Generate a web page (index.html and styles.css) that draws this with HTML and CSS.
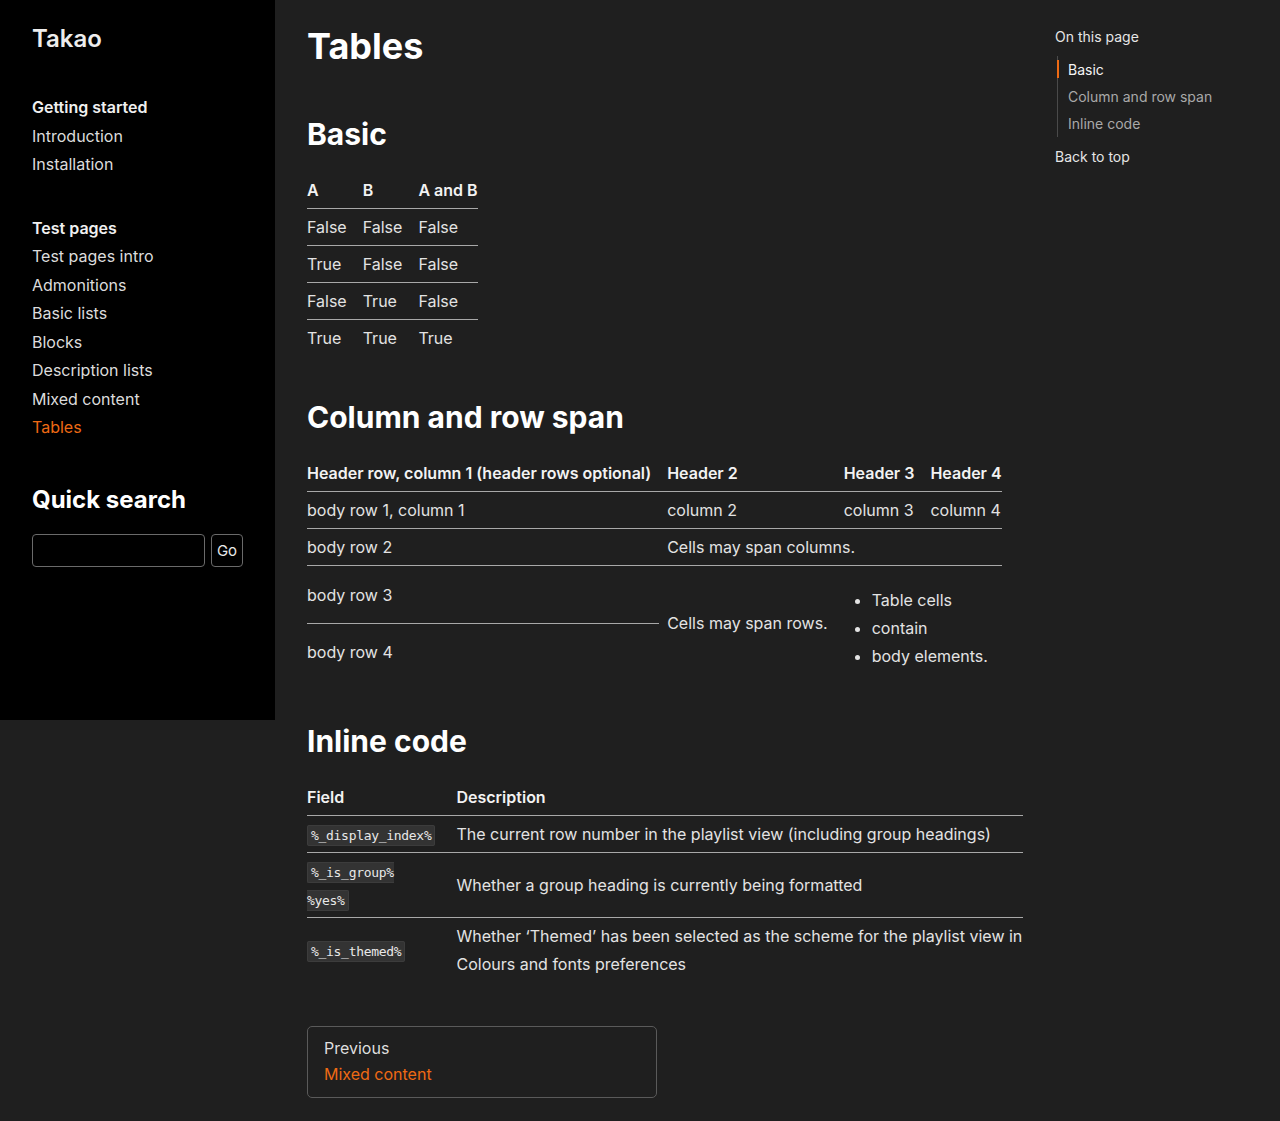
FILE: index.html
```html
<!DOCTYPE html>
<html lang="en">
<head>
<meta charset="utf-8">
<title>Tables</title>
<link rel="stylesheet" href="styles.css">
</head>
<body>
<div class="page">
  <aside class="sidebar">
    <div class="logo">Takao</div>
    <nav class="nav">
      <div class="nav-group">
        <div class="nav-title">Getting started</div>
        <a class="nav-link" href="#">Introduction</a>
        <a class="nav-link" href="#">Installation</a>
      </div>
      <div class="nav-group">
        <div class="nav-title">Test pages</div>
        <a class="nav-link" href="#">Test pages intro</a>
        <a class="nav-link" href="#">Admonitions</a>
        <a class="nav-link" href="#">Basic lists</a>
        <a class="nav-link" href="#">Blocks</a>
        <a class="nav-link" href="#">Description lists</a>
        <a class="nav-link" href="#">Mixed content</a>
        <a class="nav-link active" href="#">Tables</a>
      </div>
    </nav>
    <h3 class="search-title">Quick search</h3>
    <form class="search">
      <input class="search-input" type="text">
      <button class="search-btn" type="button">Go</button>
    </form>
  </aside>

  <main class="content">
    <h1 class="title">Tables</h1>

    <h2 class="section">Basic</h2>
    <table class="tbl">
      <thead><tr><th>A</th><th>B</th><th>A and B</th></tr></thead>
      <tbody>
        <tr><td>False</td><td>False</td><td>False</td></tr>
        <tr><td>True</td><td>False</td><td>False</td></tr>
        <tr><td>False</td><td>True</td><td>False</td></tr>
        <tr><td>True</td><td>True</td><td>True</td></tr>
      </tbody>
    </table>

    <h2 class="section">Column and row span</h2>
    <table class="tbl">
      <thead><tr><th>Header row, column 1 (header rows optional)</th><th>Header 2</th><th>Header 3</th><th>Header 4</th></tr></thead>
      <tbody>
        <tr><td>body row 1, column 1</td><td>column 2</td><td>column 3</td><td>column 4</td></tr>
        <tr><td>body row 2</td><td colspan="3">Cells may span columns.</td></tr>
        <tr class="row3"><td>body row 3</td><td rowspan="2" class="nob">Cells may span rows.</td><td rowspan="2" colspan="2" class="nob">
          <ul class="cell-list"><li>Table cells</li><li>contain</li><li>body elements.</li></ul>
        </td></tr>
        <tr class="row4"><td>body row 4</td></tr>
      </tbody>
    </table>

    <h2 class="section">Inline code</h2>
    <table class="tbl full">
      <thead><tr><th>Field</th><th>Description</th></tr></thead>
      <tbody>
        <tr><td><code>%_display_index%</code></td><td>The current row number in the playlist view (including group headings)</td></tr>
        <tr><td><code>%_is_group% %yes%</code></td><td>Whether a group heading is currently being formatted</td></tr>
        <tr><td><code>%_is_themed%</code></td><td>Whether ‘Themed’ has been selected as the scheme for the playlist view in Colours and fonts preferences</td></tr>
      </tbody>
    </table>

    <div class="pager">
      <a class="prev" href="#">
        <span class="prev-label">Previous</span>
        <span class="prev-title">Mixed content</span>
      </a>
    </div>
  </main>

  <aside class="toc">
    <div class="toc-title">On this page</div>
    <ul class="toc-list">
      <li class="toc-item active">Basic</li>
      <li class="toc-item">Column and row span</li>
      <li class="toc-item">Inline code</li>
    </ul>
    <div class="toc-top">Back to top</div>
  </aside>
</div>
</body>
</html>
```

FILE: styles.css
```css
html, body {
  margin: 0;
  padding: 0;
  background: #1f1f1f;
}
body {
  font-family: Inter, "Noto Sans", sans-serif;
  font-size: 16px;
  line-height: 28.5px;
  color: #e3e3e3;
}
a { text-decoration: none; color: inherit; }

.page {
  display: flex;
  align-items: flex-start;
  min-height: 1121px;
}

.sidebar {
  width: 275px;
  flex: none;
  box-sizing: border-box;
  height: 720px;
  background: #000;
  padding: 21px 32px 0 32px;
}
.logo {
  font-size: 24px;
  font-weight: 600;
  line-height: 36px;
  color: #ededed;
  margin-bottom: 36px;
}
.nav-group {
  display: flex;
  flex-direction: column;
  margin-bottom: 35px;
}
.nav-title {
  font-weight: 600;
  color: #f0f0f0;
}
.nav-link { color: #dcdcdc; }
.nav-link.active { color: #ee6a14; }

.search-title {
  font-size: 24px;
  font-weight: 700;
  line-height: 36px;
  color: #fff;
  margin: 40px 0 16px;
}
.search {
  display: flex;
  gap: 6px;
}
.search-input {
  width: 173px;
  height: 33px;
  box-sizing: border-box;
  background: #000;
  border: 1px solid #6a6a6a;
  border-radius: 4px;
  margin: 0;
}
.search-btn {
  height: 33px;
  width: 32px;
  box-sizing: border-box;
  background: #000;
  border: 1px solid #6a6a6a;
  border-radius: 4px;
  color: #e8e8e8;
  font-family: Inter, sans-serif;
  font-size: 15px;
  padding: 0;
  margin: 0;
}

.content {
  width: 716px;
  flex: none;
  padding: 0 32px 24px;
}
.title {
  font-size: 36px;
  font-weight: 700;
  line-height: 44px;
  color: #fff;
  margin: 24px 0 47px;
}
.section {
  font-size: 30px;
  font-weight: 700;
  line-height: 38px;
  color: #fff;
  margin: 0 0 19px;
}
.tbl {
  border-collapse: collapse;
  margin-bottom: 42px;
  line-height: 28px;
}
.tbl th, .tbl td {
  text-align: left;
  padding: 4px 8px;
  vertical-align: middle;
}
.tbl th {
  font-weight: 600;
  color: #f2f2f2;
  border-bottom: 1px solid #a8a8a8;
}
.tbl td {
  border-bottom: 1px solid #a8a8a8;
}
.tbl tr > :first-child { padding-left: 0; }
.tbl tr > :last-child { padding-right: 0; }
.tbl tbody tr:last-child td { border-bottom: none; }
.tbl td.nob { border-bottom: none; }
.row3 td:first-child { height: 49px; }
.cell-list {
  margin: 16px 0 6px;
  padding-left: 28px;
}
.tbl.full { width: 100%; }

code {
  font-family: "DejaVu Sans Mono", monospace;
  font-size: 13px;
  line-height: 1;
  letter-spacing: -0.3px;
  background: #333;
  border: 1px solid #3c3c3c;
  border-radius: 2px;
  padding: 2px 3px;
  color: #e8e8e8;
}

.pager { margin-top: 44px; }
.prev {
  display: flex;
  flex-direction: column;
  width: 350px;
  box-sizing: border-box;
  border: 1px solid #5a5a5a;
  border-radius: 5px;
  padding: 8px 16px 10px;
  line-height: 26px;
}
.prev-label { color: #dedede; }
.prev-title { color: #ee6a14; }

.toc {
  flex: none;
  padding: 23px 0 0 0;
  font-size: 14px;
  line-height: 27px;
}
.toc-title { color: #e6e6e6; margin-bottom: 6px; }
.toc-list {
  list-style: none;
  margin: 0 0 6px 2px;
  padding: 0;
  border-left: 1px solid #4a4a4a;
}
.toc-item {
  padding-left: 10px;
  color: #a9a9a9;
  position: relative;
}
.toc-item.active { color: #f4f4f4; }
.toc-item.active::before {
  content: "";
  position: absolute;
  left: -1px;
  top: 4px;
  bottom: 5px;
  width: 2px;
  background: #ee6a14;
}
.toc-top { color: #e6e6e6; }
```
